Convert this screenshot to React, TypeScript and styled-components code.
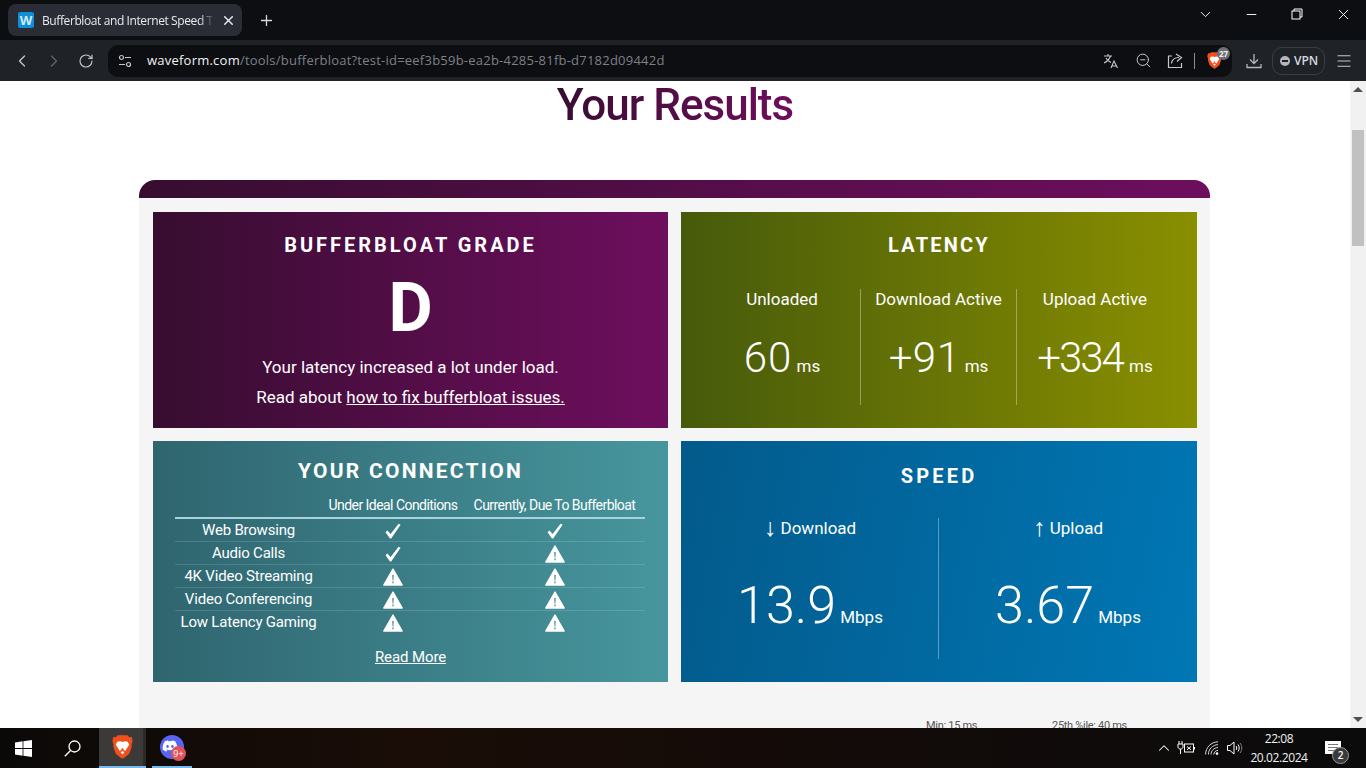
import styled, { createGlobalStyle } from 'styled-components'
import { ChevronDown, ChevronLeft, ChevronRight, ChevronUp, Menu, Minus, Plus, RotateCw, X, ZoomOut } from 'lucide-react'
import { FaDiscord } from 'react-icons/fa'

const connectionRows = [
  { name: 'Web Browsing', ideal: true, current: true },
  { name: 'Audio Calls', ideal: true, current: false },
  { name: '4K Video Streaming', ideal: false, current: false },
  { name: 'Video Conferencing', ideal: false, current: false },
  { name: 'Low Latency Gaming', ideal: false, current: false },
]

const latencyStats = [
  { label: 'Unloaded', value: '60', spacing: 1 },
  { label: 'Download Active', value: '+91', spacing: 0.5 },
  { label: 'Upload Active', value: '+334', spacing: -2 },
]

const BraveLogo = ({ size }: { size: number }) => (
  <svg width={size} height={size * 1.14} viewBox="0 0 28 32">
    <path d="M14 0.5 L20.5 0.5 L23 3 L26 2.5 L27.5 8 L26 13 L26.5 15 L23 25 L15.5 31 L14 31.5 L12.5 31 L5 25 L1.5 15 L2 13 L0.5 8 L2 2.5 L5 3 L7.5 0.5 Z" fill="#f1501e" />
    <path d="M14 19 L10 21.5 L9 19 L5 13 L7 9 L11 8.5 L14 9.5 L17 8.5 L21 9 L23 13 L19 19 L18 21.5 Z" fill="#fff" />
    <path d="M10 13 L12.5 14.5 L11 16 Z M18 13 L15.5 14.5 L17 16 Z M11.5 23 L14 21.5 L16.5 23 L14 26 Z" fill="#fff" />
    <path d="M12 19 L14 17.5 L16 19 L14 20.5 Z" fill="#f1501e" />
  </svg>
)

const CheckMark = () => (
  <svg width="16" height="16" viewBox="0 0 16 16">
    <path d="M0.5 9.2 L2.4 7.6 L5.6 11 L13.6 0.8 L15.6 1.8 L6.2 15.6 L5 15.6 Z" fill="#fff" />
  </svg>
)

const WarningMark = () => (
  <svg width="20" height="18" viewBox="0 0 20 18">
    <path d="M10 1 L19.2 17 L0.8 17 Z" fill="#fff" stroke="#fff" strokeWidth="1.4" strokeLinejoin="round" />
    <path d="M9.3 7 H10.7 L10.4 12.5 H9.6 Z M9.4 13.6 H10.6 V15.2 H9.4 Z" fill="#3f7f88" />
  </svg>
)

const App = () => {
  return (
    <Screen>
      <GlobalStyle />

      <TabStrip>
        <Tab>
          <Favicon>W</Favicon>
          <TabTitle>Bufferbloat and Internet Speed Test</TabTitle>
          <X size={15} color="#e8eaed" strokeWidth={2.4} />
        </Tab>
        <NewTab><Plus size={17} strokeWidth={1.8} /></NewTab>
        <WindowControls>
          <WindowButton><ChevronDown size={17} strokeWidth={1.3} /></WindowButton>
          <WindowButton><Minus size={15} strokeWidth={1.5} /></WindowButton>
          <WindowButton>
            <svg width="12" height="12" viewBox="0 0 12 12" fill="none" stroke="#fff">
              <path d="M3 3 V1 H11 V9 H9" />
              <rect x="1" y="3" width="8" height="8" />
            </svg>
          </WindowButton>
          <WindowButton><X size={17} strokeWidth={1.3} /></WindowButton>
        </WindowControls>
      </TabStrip>

      <Toolbar>
        <NavButton><ChevronLeft size={20} strokeWidth={1.6} /></NavButton>
        <NavButton $dim><ChevronRight size={20} strokeWidth={1.6} /></NavButton>
        <NavButton><RotateCw size={16} strokeWidth={1.7} /></NavButton>
        <AddressBar>
          <SiteIcon>
            <svg width="14" height="14" viewBox="0 0 14 14" fill="none" stroke="#c4c7cc" strokeWidth="1.2">
              <circle cx="3.5" cy="3.5" r="2" />
              <path d="M7 3.5 H13 M1 10.5 H7" />
              <circle cx="10.5" cy="10.5" r="2" />
            </svg>
          </SiteIcon>
          <Url>waveform.com<UrlPath>/tools/bufferbloat?test-id=eef3b59b-ea2b-4285-81fb-d7182d09442d</UrlPath></Url>
          <AddressActions>
            <ActionButton>
              <svg width="16" height="16" viewBox="0 0 16 16" fill="none" stroke="#c4c7cc" strokeWidth="1.1">
                <path d="M1 3 H9 M5 1 V3 M7.5 3 C6.5 6 4 8.5 1 10 M3 5 C4 7 6 8.5 8 9.5 M8 15 L11 8 L14.5 15 M9 13 H13.5" />
              </svg>
            </ActionButton>
            <ActionButton><ZoomOut size={17} strokeWidth={1.4} /></ActionButton>
            <ActionButton>
              <svg width="16" height="16" viewBox="0 0 16 16" fill="none" stroke="#c4c7cc" strokeWidth="1.2">
                <path d="M5 3 H1.5 V14.5 H14.5 V10 M4.5 10.5 C5 6.5 8 4.5 12 4.5 M9 1 L14.5 4.5 L10 8.5" />
              </svg>
            </ActionButton>
            <ActionDivider />
            <ShieldSlot>
              <BraveLogo size={15} />
              <ShieldCount>27</ShieldCount>
            </ShieldSlot>
          </AddressActions>
        </AddressBar>
        <DownloadButton>
          <svg width="16" height="16" viewBox="0 0 16 16" fill="none" stroke="#b4b7bc" strokeWidth="1.3">
            <path d="M8 1 V10 M4 6.5 L8 10.5 L12 6.5 M1 11 V14.5 H15 V11" />
          </svg>
        </DownloadButton>
        <VpnPill><VpnDot />VPN</VpnPill>
        <NavButton><Menu size={18} strokeWidth={1.5} color="#c4c7cc" /></NavButton>
      </Toolbar>

      <Viewport>
        <Page>
          <Heading>Your Results</Heading>
          <Results>
            <ResultsCap />
            <ResultsBody>
              <PanelGrid>
                <Panel $from="#370d30" $to="#6e0e5e">
                  <PanelTitle>BUFFERBLOAT GRADE</PanelTitle>
                  <Grade>D</Grade>
                  <GradeNote>Your latency increased a lot under load.</GradeNote>
                  <GradeNoteLine>Read about <TextLink href="#">how to fix bufferbloat issues.</TextLink></GradeNoteLine>
                </Panel>

                <Panel $from="#465a0b" $to="#8a8f00">
                  <LatencyTitle>LATENCY</LatencyTitle>
                  <LatencyColumns>
                    {latencyStats.map((stat, i) => (
                      <StatColumn key={stat.label} $divided={i > 0}>
                        <StatLabel>{stat.label}</StatLabel>
                        <LatencyValue>
                          <LatencyNumber $spacing={stat.spacing}>{stat.value}</LatencyNumber>
                          <Unit> ms</Unit>
                        </LatencyValue>
                      </StatColumn>
                    ))}
                  </LatencyColumns>
                </Panel>

                <Panel $from="#2f656f" $to="#47969e">
                  <ConnectionTitle>YOUR CONNECTION</ConnectionTitle>
                  <ConnectionHead>
                    <span />
                    <HeadCell>Under Ideal Conditions</HeadCell>
                    <HeadCell>Currently, Due To Bufferbloat</HeadCell>
                  </ConnectionHead>
                  {connectionRows.map((row) => (
                    <ConnectionRow key={row.name}>
                      <RowName>{row.name}</RowName>
                      <RowMark>{row.ideal ? <CheckMark /> : <WarningMark />}</RowMark>
                      <RowMark>{row.current ? <CheckMark /> : <WarningMark />}</RowMark>
                    </ConnectionRow>
                  ))}
                  <ReadMore><TextLink href="#">Read More</TextLink></ReadMore>
                </Panel>

                <Panel $from="#035a8b" $to="#0077b5" $angle={100}>
                  <SpeedTitle>SPEED</SpeedTitle>
                  <SpeedColumns>
                    <StatColumn>
                      <StatLabel><Arrow>↓</Arrow> Download</StatLabel>
                      <SpeedValue>13.9<Unit> Mbps</Unit></SpeedValue>
                    </StatColumn>
                    <StatColumn $divided>
                      <StatLabel><Arrow>↑</Arrow> Upload</StatLabel>
                      <SpeedValue>3.67<Unit> Mbps</Unit></SpeedValue>
                    </StatColumn>
                  </SpeedColumns>
                </Panel>
              </PanelGrid>
              <PercentileRow>
                <span>Min: 15 ms</span>
                <span>25th %ile: 40 ms</span>
              </PercentileRow>
            </ResultsBody>
          </Results>
        </Page>

        <Scrollbar>
          <ScrollArrow $up />
          <ScrollTrack><ScrollThumb /></ScrollTrack>
          <ScrollArrow />
        </Scrollbar>
      </Viewport>

      <Taskbar>
        <TaskSlot $width={46}>
          <svg width="17" height="17" viewBox="0 0 17 17" fill="#fff">
            <path d="M0 2.4 L7.6 1.3 V8 H0 Z M8.4 1.2 L17 0 V8 H8.4 Z M0 9 H7.6 V15.7 L0 14.6 Z M8.4 9 H17 V17 L8.4 15.8 Z" />
          </svg>
        </TaskSlot>
        <TaskSlot $width={53}>
          <svg width="17" height="17" viewBox="0 0 17 17" fill="none" stroke="#fff" strokeWidth="1.3">
            <circle cx="10.5" cy="6.5" r="5.5" />
            <path d="M6.5 10.5 L0.8 16.2" />
          </svg>
        </TaskSlot>
        <TaskApp $width={47} $active>
          <BraveLogo size={21} />
        </TaskApp>
        <TaskGap />
        <TaskApp $width={40}>
          <DiscordIcon>
            <FaDiscord size={16} color="#fff" />
            <DiscordBadge>9+</DiscordBadge>
          </DiscordIcon>
        </TaskApp>

        <Tray>
          <ChevronUp size={18} strokeWidth={1.4} color="#fff" />
          <TrayIcon $width={26}>
            <svg width="18" height="14" viewBox="0 0 18 14" fill="none" stroke="#fff" strokeWidth="1">
              <path d="M2 0 V3 M5 0 V3 M1 3 H6 V6 C6 7.5 4.5 8 3.5 8 C2.5 8 1 7.5 1 6 Z M3.5 8 V13" />
              <rect x="7.5" y="3" width="9" height="8" />
              <path d="M10 5.5 L14 8.8 M14 5.5 L10 8.8" />
              <path d="M17.5 6 V8.5" />
            </svg>
          </TrayIcon>
          <TrayIcon $width={26}>
            <svg width="14" height="14" viewBox="0 0 14 14" fill="none" stroke="#d8d8d8" strokeWidth="1">
              <path d="M0.6 13.5 C0.6 6.5 6 1 13 0.8 M3.4 13.5 C3.4 8 8 3.8 13 3.6 M6 13.5 C6 10 9 6.6 13 6.5 M8.8 13.5 C8.8 11.5 10.5 9.4 13 9.4" />
              <circle cx="12" cy="12.6" r="1.3" fill="#fff" stroke="none" />
            </svg>
          </TrayIcon>
          <TrayIcon $width={20}>
            <svg width="16" height="14" viewBox="0 0 16 14" fill="none" stroke="#fff" strokeWidth="1">
              <path d="M0.5 4.5 H3 L7 1 V13 L3 9.5 H0.5 Z" />
              <path d="M9 5 C10 6 10 8 9 9 M11 3.5 C12.6 5.5 12.6 8.5 11 10.5" />
              <path d="M13 2 C15.4 5 15.4 9 13 12" stroke="#888" />
            </svg>
          </TrayIcon>
          <Clock>
            <span>22:08</span>
            <span>20.02.2024</span>
          </Clock>
          <Notifications>
            <svg width="16" height="14" viewBox="0 0 16 14">
              <path d="M0 0 H16 V13 H0 Z" fill="#fff" />
              <path d="M3 3.5 H13 M3 6.5 H13 M3 9.5 H10" stroke="#777" />
            </svg>
            <NotificationCount>2</NotificationCount>
          </Notifications>
        </Tray>
      </Taskbar>
    </Screen>
  )
}

export default App

const GlobalStyle = createGlobalStyle`
  html, body {
    margin: 0;
    padding: 0;
    background: #fff;
  }
  * {
    box-sizing: border-box;
  }
`

const Screen = styled.div`
  display: flex;
  flex-direction: column;
  width: 1366px;
  height: 768px;
  overflow: hidden;
  font-family: Roboto, "Liberation Sans", sans-serif;
`

const TabStrip = styled.div`
  display: flex;
  align-items: flex-start;
  height: 40px;
  padding: 4px 0 0 8px;
  background: #0d0e12;
`
const Tab = styled.div`
  display: flex;
  align-items: center;
  width: 234px;
  height: 32px;
  padding: 0 6px 0 10px;
  border-radius: 8px;
  background: #2a2d35;
`
const Favicon = styled.div`
  width: 16px;
  height: 16px;
  flex-shrink: 0;
  border-radius: 2px;
  background: #0f8fd6;
  color: #cfeaf8;
  font: 700 13px/16px "Open Sans", sans-serif;
  text-align: center;
`
const TabTitle = styled.div`
  flex: 1;
  margin-left: 8px;
  overflow: hidden;
  white-space: nowrap;
  color: #e8eaed;
  font: 12px "Open Sans", sans-serif;
  letter-spacing: -0.4px;
  -webkit-mask-image: linear-gradient(to right, #000 88%, transparent 96%);
`
const NewTab = styled.div`
  display: flex;
  justify-content: center;
  align-items: center;
  width: 32px;
  height: 32px;
  margin-left: 8px;
  color: #d8dade;
`
const WindowControls = styled.div`
  display: flex;
  align-items: center;
  height: 20px;
  margin-left: auto;
`
const WindowButton = styled.div`
  display: flex;
  justify-content: center;
  align-items: center;
  width: 46px;
  height: 20px;
  color: #fff;
`

const Toolbar = styled.div`
  display: flex;
  align-items: center;
  height: 41px;
  padding: 0 6px;
  background: #1f2227;
`
const NavButton = styled.div<{ $dim?: boolean }>`
  display: flex;
  justify-content: center;
  align-items: center;
  width: 32px;
  height: 32px;
  flex-shrink: 0;
  color: ${(p) => (p.$dim ? '#62656b' : '#c4c7cc')};
`
const AddressBar = styled.div`
  display: flex;
  align-items: center;
  flex: 1;
  height: 32px;
  margin-left: 6px;
  padding-left: 10px;
  border-radius: 10px;
  background: #0d0e12;
`
const SiteIcon = styled.div`
  display: flex;
  width: 14px;
  color: #c4c7cc;
`
const Url = styled.div`
  margin-left: 15px;
  padding-bottom: 1px;
  color: #f1f1f1;
  font: 13px "Open Sans", sans-serif;
  letter-spacing: 0.23px;
  white-space: nowrap;
`
const UrlPath = styled.span`
  color: #7d8087;
`
const AddressActions = styled.div`
  display: flex;
  align-items: center;
  margin-left: auto;
  padding-right: 5px;
`
const ActionButton = styled.div`
  display: flex;
  justify-content: center;
  align-items: center;
  width: 32px;
  color: #c4c7cc;
`
const ActionDivider = styled.div`
  width: 1px;
  height: 16px;
  margin: 0 12px 0 3px;
  background: #8a8d92;
`
const ShieldSlot = styled.div`
  position: relative;
  display: flex;
  width: 20px;
`
const ShieldCount = styled.div`
  position: absolute;
  top: -5px;
  left: 10px;
  width: 13px;
  height: 13px;
  border-radius: 50%;
  background: #6c6f76;
  color: #f1f1f1;
  font: 700 8px/13px "Open Sans", sans-serif;
  text-align: center;
`
const DownloadButton = styled(NavButton)`
  margin-left: 6px;
`
const VpnPill = styled.div`
  display: flex;
  align-items: center;
  gap: 4px;
  width: 53px;
  height: 28px;
  margin: 0 3px 0 2px;
  padding-left: 7px;
  border: 1px solid #3b3e45;
  border-radius: 10px;
  color: #d8dade;
  font: 600 12px "Open Sans", sans-serif;
`
const VpnDot = styled.div`
  position: relative;
  width: 10px;
  height: 10px;
  flex-shrink: 0;
  border-radius: 50%;
  background: #b4b7bc;
  &::after {
    content: '';
    position: absolute;
    top: 4px;
    left: 2px;
    width: 6px;
    height: 2px;
    background: #1f2227;
  }
`

const Viewport = styled.div`
  display: flex;
  flex: 1;
  min-height: 0;
`
const Page = styled.div`
  flex: 1;
  overflow: hidden;
  background: #fff;
`
const Heading = styled.h1`
  width: max-content;
  margin: 0 auto 51px;
  padding: 0 2px;
  background: linear-gradient(to right, #370d30, #6e0e5e);
  background-clip: text;
  -webkit-background-clip: text;
  color: transparent;
  font-size: 44px;
  font-weight: 500;
  line-height: 48px;
  letter-spacing: -1px;
`
const Results = styled.div`
  width: 1071px;
  margin-left: 139px;
`
const ResultsCap = styled.div`
  height: 18px;
  border-radius: 16px 16px 0 0;
  background: linear-gradient(to right, #370d30, #6e0e5e);
`
const ResultsBody = styled.div`
  padding: 14px 13px 0 14px;
  background: #f5f5f5;
`
const PanelGrid = styled.div`
  display: grid;
  grid-template-columns: 515px 516px;
  grid-template-rows: 216px 241px;
  gap: 13px;
`
const Panel = styled.section<{ $from: string; $to: string; $angle?: number }>`
  display: flex;
  flex-direction: column;
  background: linear-gradient(${(p) => p.$angle ?? 90}deg, ${(p) => p.$from}, ${(p) => p.$to});
  color: #fff;
  text-align: center;
`
const PanelTitle = styled.h2`
  margin: 19px 0 0;
  font-size: 20px;
  font-weight: 700;
  line-height: 28px;
  letter-spacing: 3px;
`
const LatencyTitle = styled(PanelTitle)`
  letter-spacing: 2.2px;
`
const ConnectionTitle = styled(PanelTitle)`
  margin-top: 16px;
  font-size: 21px;
  letter-spacing: 2.25px;
`
const SpeedTitle = styled(PanelTitle)`
  margin-top: 21px;
  letter-spacing: 3.2px;
`
const Grade = styled.div`
  margin-top: 13px;
  font-size: 68px;
  font-weight: 700;
  line-height: 72px;
`
const GradeNote = styled.div`
  margin-top: 8px;
  font-size: 17px;
  font-weight: 400;
  line-height: 30px;
`
const GradeNoteLine = styled(GradeNote)`
  margin-top: 0;
`
const TextLink = styled.a`
  color: inherit;
  text-decoration: underline;
`
const LatencyColumns = styled.div`
  display: grid;
  grid-template-columns: 157px 156px 157px;
  height: 116px;
  margin: 30px 22px 0;
`
const SpeedColumns = styled.div`
  display: grid;
  grid-template-columns: 257px 259px;
  height: 141px;
  margin-top: 28px;
`
const StatColumn = styled.div<{ $divided?: boolean }>`
  border-left: 1px solid ${(p) => (p.$divided ? 'rgba(255, 255, 255, 0.35)' : 'transparent')};
`
const StatLabel = styled.div`
  font-size: 17px;
  line-height: 20px;
  white-space: nowrap;
`
const Arrow = styled.span`
  font-size: 25px;
  font-weight: 300;
  line-height: 0;
  vertical-align: -2px;
`
const LatencyValue = styled.div`
  margin-top: 24px;
  font-size: 42px;
  font-weight: 300;
  line-height: 50px;
  white-space: nowrap;
`
const LatencyNumber = styled.span<{ $spacing: number }>`
  margin-right: ${(p) => Math.max(0, -p.$spacing)}px;
  letter-spacing: ${(p) => p.$spacing}px;
`
const SpeedValue = styled.div`
  margin-top: 38px;
  font-size: 52px;
  font-weight: 300;
  line-height: 60px;
  white-space: nowrap;
`
const Unit = styled.span`
  font-size: 17px;
  font-weight: 400;
  letter-spacing: 0;
`
const ConnectionHead = styled.div`
  display: grid;
  grid-template-columns: 147px 142px 181px;
  margin: 10px 23px 0 22px;
  padding-bottom: 2px;
  border-bottom: 2px solid #a7d3da;
`
const HeadCell = styled.div`
  font-size: 14px;
  line-height: 20px;
  letter-spacing: -0.55px;
  white-space: nowrap;
`
const ConnectionRow = styled.div`
  display: grid;
  grid-template-columns: 147px 142px 181px;
  align-items: center;
  height: 23px;
  margin: 0 23px 0 22px;
  border-bottom: 1px solid rgba(255, 255, 255, 0.14);
  &:nth-last-child(2) {
    border-bottom-color: transparent;
  }
`
const RowName = styled.div`
  font-size: 15px;
  letter-spacing: -0.2px;
  white-space: nowrap;
`
const RowMark = styled.div`
  display: flex;
  justify-content: center;
  align-items: center;
  padding-top: 2px;
`
const ReadMore = styled.div`
  margin-top: 12px;
  font-size: 15px;
  line-height: 22px;
  letter-spacing: -0.1px;
`
const PercentileRow = styled.div`
  display: grid;
  grid-template-columns: 126px 126px;
  padding: 37px 0 10px 773px;
  color: #555;
  font-size: 11px;
  line-height: 13px;
  letter-spacing: -0.3px;
`

const Scrollbar = styled.div`
  display: flex;
  flex-direction: column;
  width: 16px;
  background: #f1f1f1;
`
const ScrollArrow = styled.div<{ $up?: boolean }>`
  width: 0;
  height: 0;
  margin: ${(p) => (p.$up ? '6px' : 'auto')} 3px 6px;
  border-left: 5px solid transparent;
  border-right: 5px solid transparent;
  ${(p) => (p.$up ? 'border-bottom: 5px solid #505050;' : 'border-top: 5px solid #505050;')}
`
const ScrollTrack = styled.div`
  flex: 1;
  padding: 32px 2px 0;
`
const ScrollThumb = styled.div`
  height: 116px;
  background: #c1c1c1;
`

const Taskbar = styled.div`
  display: flex;
  align-items: stretch;
  height: 40px;
  background: linear-gradient(to right, #0b0908, #1a0d07 30%, #140b08 55%, #0b0b0c);
`
const TaskSlot = styled.div<{ $width: number }>`
  display: flex;
  justify-content: center;
  align-items: center;
  width: ${(p) => p.$width}px;
`
const TaskApp = styled(TaskSlot)<{ $active?: boolean }>`
  border-bottom: 2px solid #76b9ed;
  background: ${(p) => (p.$active ? '#3c3a39' : 'transparent')};
  box-shadow: ${(p) => (p.$active ? 'inset -3px 0 0 #2c2a29' : 'none')};
`
const TaskGap = styled.div`
  width: 6px;
`
const DiscordIcon = styled.div`
  position: relative;
  display: flex;
  justify-content: center;
  align-items: center;
  width: 24px;
  height: 24px;
  padding: 0 4px 3px 0;
  border-radius: 50%;
  background: #5865f2;
`
const DiscordBadge = styled.div`
  position: absolute;
  right: -2px;
  bottom: -2px;
  width: 15px;
  height: 15px;
  border-radius: 50%;
  background: #e0525b;
  color: #fff;
  font: 9px/15px "Open Sans", sans-serif;
  text-align: center;
`
const Tray = styled.div`
  display: flex;
  align-items: center;
  margin-left: auto;
  padding-right: 17px;
`
const TrayIcon = styled.div<{ $width: number }>`
  display: flex;
  justify-content: center;
  width: ${(p) => p.$width}px;
`
const Clock = styled.div`
  display: flex;
  flex-direction: column;
  align-items: center;
  gap: 3px;
  width: 60px;
  margin-left: 4px;
  color: #f1f1f1;
  font: 12px/16px "Open Sans", sans-serif;
  letter-spacing: -0.4px;
`
const Notifications = styled.div`
  position: relative;
  display: flex;
  justify-content: center;
  width: 32px;
  margin-left: 8px;
`
const NotificationCount = styled.div`
  position: absolute;
  top: 6px;
  left: 15px;
  width: 17px;
  height: 17px;
  border-radius: 50%;
  background: #3a3a3a;
  border: 1px solid #999;
  color: #fff;
  font: 600 10px/15px "Open Sans", sans-serif;
  text-align: center;
`
